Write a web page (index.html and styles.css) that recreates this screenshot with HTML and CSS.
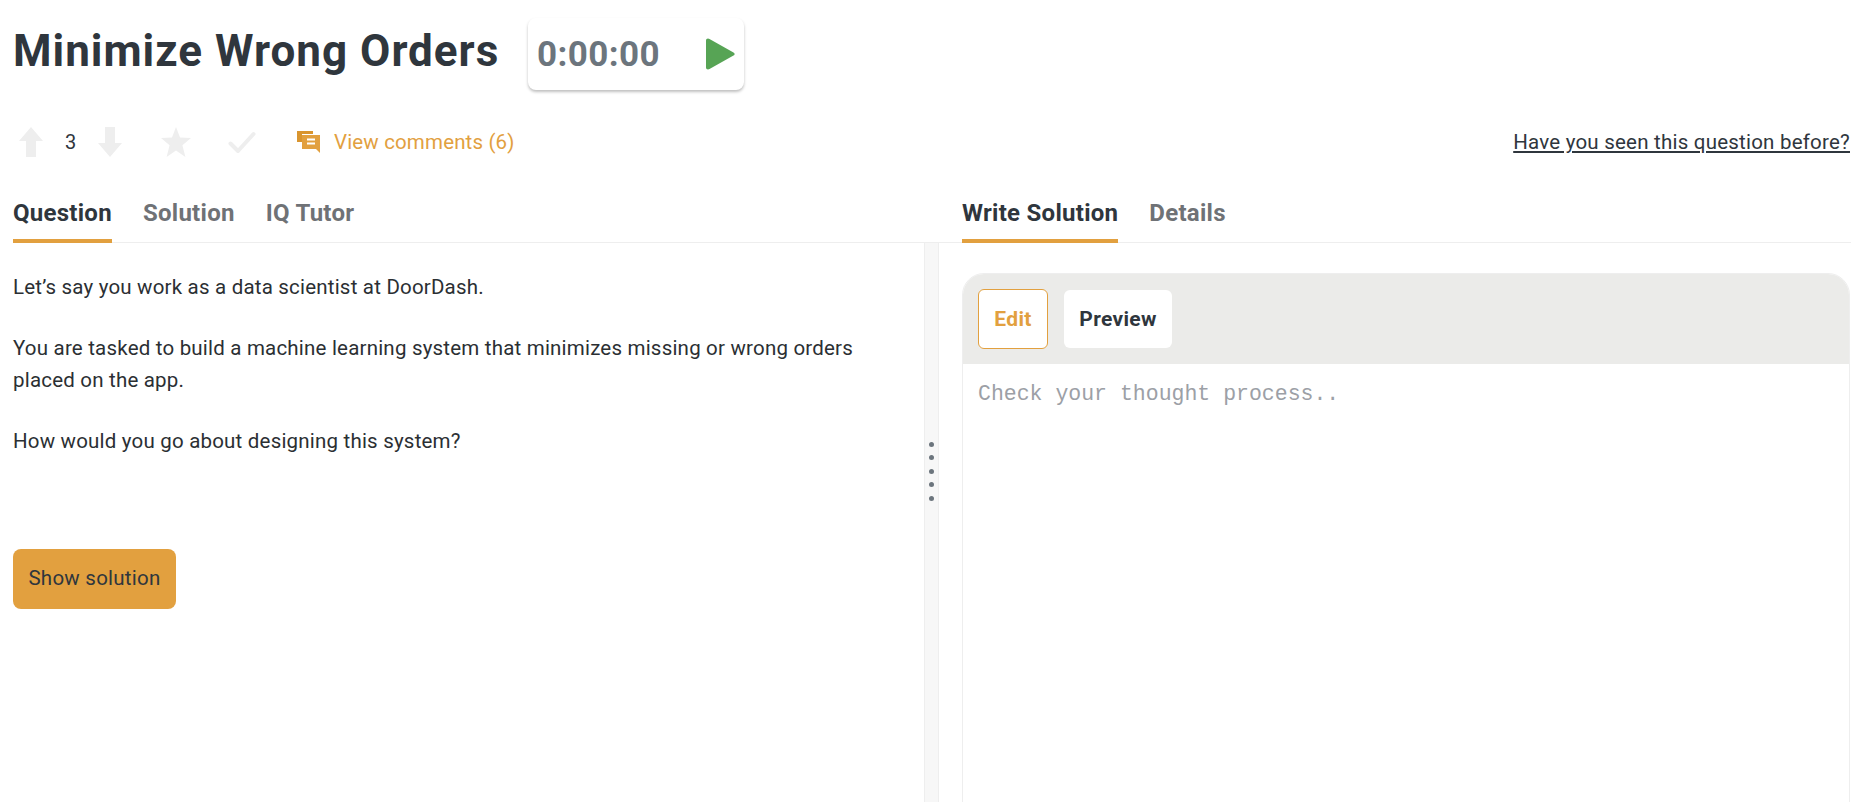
FILE: index.html
```html
<!DOCTYPE html>
<html lang="en">
<head>
<meta charset="utf-8">
<title>Minimize Wrong Orders</title>
<link rel="stylesheet" href="styles.css">
</head>
<body>
<header class="title-row">
  <h1 class="title">Minimize Wrong Orders</h1>
  <div class="timer">
    <span class="timer-value">0:00:00</span>
    <svg class="play" viewBox="0 0 29 32" aria-hidden="true"><path d="M2 0.5 C0.8 0.5 0 1.3 0 2.5 V29.5 C0 30.7 0.8 31.5 2 31.5 C2.5 31.5 3 31.3 3.5 31 L27.5 17.6 C29 16.7 29 15.3 27.5 14.4 L3.5 1 C3 0.7 2.5 0.5 2 0.5 Z"/></svg>
  </div>
</header>
<div class="action-row">
  <div class="actions">
    <svg class="icon vote" viewBox="0 0 24 30" aria-hidden="true"><path d="M12 0 L24 14 H17 V30 H7 V14 H0 Z"/></svg>
    <span class="count">3</span>
    <svg class="icon vote" viewBox="0 0 24 30" aria-hidden="true"><path d="M12 30 L24 16 H17 V0 H7 V16 H0 Z"/></svg>
    <svg class="icon star" viewBox="0 0 30 30" aria-hidden="true"><path d="M15 0 L19 10.6 L30 11 L21.4 18.2 L24.4 30 L15 23.4 L5.6 30 L8.6 18.2 L0 11 L11 10.6 Z"/></svg>
    <svg class="icon check" viewBox="0 0 28 23" aria-hidden="true"><path d="M2.5 12.5 L10 20 L25.5 3" /></svg>
    <a class="comments" href="#">
      <svg class="comment-icon" viewBox="0 0 23 22" aria-hidden="true"><path d="M0 0 H16 V3 H5 V11 H0 Z" class="back"/><path d="M5 4 H23 V18 H23 V22 L19 18 H5 Z"/><path d="M10 8.5 H18 M10 12.5 H18" class="lines"/></svg>
      <span>View comments (6)</span>
    </a>
  </div>
  <a class="seen" href="#">Have you seen this question before?</a>
</div>
<main class="panes">
  <section class="pane-left">
    <nav class="tabs">
      <span class="tab active">Question</span>
      <span class="tab">Solution</span>
      <span class="tab">IQ Tutor</span>
    </nav>
    <div class="question">
      <p>Let’s say you work as a data scientist at DoorDash.</p>
      <p>You are tasked to build a machine learning system that minimizes missing or wrong orders placed on the app.</p>
      <p>How would you go about designing this system?</p>
      <button class="show-btn" type="button">Show solution</button>
    </div>
  </section>
  <div class="gutter-col">
    <div class="gutter-top"></div>
    <div class="gutter">
      <i class="dot"></i><i class="dot"></i><i class="dot"></i><i class="dot"></i><i class="dot"></i>
    </div>
  </div>
  <section class="pane-right">
    <nav class="tabs tabs-right">
      <span class="tab active">Write Solution</span>
      <span class="tab">Details</span>
    </nav>
    <div class="editor-wrap">
      <div class="editor">
        <div class="editor-head">
          <button class="mode mode-edit" type="button">Edit</button>
          <button class="mode mode-preview" type="button">Preview</button>
        </div>
        <div class="editor-body">Check your thought process..</div>
      </div>
    </div>
  </section>
</main>
</body>
</html>
```
FILE: styles.css
```css
* { box-sizing: border-box; }
html, body { height: 100%; }
body {
  margin: 0;
  height: 802px;
  overflow: hidden;
  background: #fff;
  color: #2f363d;
  font-family: Roboto, "Noto Sans", sans-serif;
}
.title-row {
  display: flex;
  align-items: center;
  height: 108px;
  padding: 18px 0 18px 13px;
}
.title {
  margin: 0 0 6px;
  width: 515px;
  font-size: 44px;
  font-weight: 700;
  line-height: 64px;
  letter-spacing: 1px;
  color: #2f363d;
  white-space: nowrap;
}
.timer {
  display: flex;
  align-items: center;
  justify-content: space-between;
  width: 216px;
  height: 72px;
  padding: 0 9px 0 9px;
  border-radius: 8px;
  box-shadow: 0 2px 3px rgba(0,0,0,.25);
  background: #fff;
}
.timer-value { font-size: 35px; font-weight: 700; color: #6c757d; letter-spacing: 0.4px; }
.play { width: 29px; height: 32px; fill: #57a455; }
.action-row {
  display: flex;
  align-items: center;
  justify-content: space-between;
  height: 68px;
  padding: 0 1px 0 19px;
}
.actions { display: flex; align-items: center; }
.icon { display: block; fill: #eeeeee; }
.vote { width: 24px; height: 30px; }
.count { width: 55px; padding-left: 22px; font-size: 20px; color: #2f363d; }
.star { width: 30px; height: 30px; margin-left: 39px; }
.check { width: 28px; height: 23px; margin-left: 37px; fill: none; stroke: #eeeeee; stroke-width: 4; stroke-linecap: round; stroke-linejoin: round; }
.comments { display: flex; align-items: center; margin-left: 41px; color: #e2a03f; font-size: 20.5px; letter-spacing: 0.15px; text-decoration: none; }
.comment-icon { width: 23px; height: 22px; margin-right: 14px; fill: #e2a03f; }
.comment-icon .back { fill: #d9952f; }
.comment-icon .lines { fill: none; stroke: #fff; stroke-width: 2; }
.seen { font-size: 20.5px; letter-spacing: 0.22px; color: #2f363d; text-decoration: underline; white-space: nowrap; }
.panes { display: flex; height: 626px; }
.pane-left { width: 924px; flex: none; padding-left: 13px; }
.gutter-col { width: 15px; flex: none; display: flex; flex-direction: column; }
.gutter-top { height: 67px; border-bottom: 1px solid #eeeeee; }
.gutter {
  flex: 1;
  display: flex;
  flex-direction: column;
  align-items: center;
  gap: 8.4px;
  padding-top: 199px;
  background: #f7f7f7;
  border-left: 1px solid #eeeeee;
  border-right: 1px solid #eeeeee;
}
.dot { display: block; width: 5px; height: 5px; border-radius: 50%; background: #6c757d; }
.pane-right { flex: 1; min-width: 0; }
.tabs {
  display: flex;
  gap: 31px;
  height: 67px;
  align-items: flex-end;
  border-bottom: 1px solid #eeeeee;
}
.tabs-right { padding-left: 23px; }
.tab {
  display: block;
  height: 48px;
  font-size: 24px;
  font-weight: 700;
  letter-spacing: 0.27px;
  line-height: 37px;
  margin-bottom: -1px;
  color: #6f7276;
  white-space: nowrap;
}
.tab.active { color: #2f363d; border-bottom: 4px solid #e2a03f; }
.question { padding-top: 28px; font-size: 20.5px; letter-spacing: 0.2px; line-height: 32px; color: #2b2f33; }
.question p { margin: 0 0 29px; max-width: 880px; }
.show-btn {
  display: block;
  width: 163px;
  height: 60px;
  margin-top: 92px;
  padding: 0 0 3px;
  border: 0;
  border-radius: 8px;
  background: #e2a03f;
  color: #2f363d;
  font: inherit;
  font-size: 20.5px;
  letter-spacing: 0.25px;
}
.editor-wrap { padding: 30px 1px 0 23px; }
.editor {
  height: 560px;
  border: 1px solid #eeeeee;
  border-radius: 22px 22px 0 0;
  overflow: hidden;
}
.editor-head {
  display: flex;
  align-items: center;
  gap: 16px;
  height: 90px;
  padding: 0 15px;
  background: #ebebe9;
}
.mode {
  height: 58px;
  padding: 0;
  border: 0;
  border-radius: 6px;
  background: #fff;
  color: #2f363d;
  font: inherit;
  font-size: 21px;
  font-weight: 700;
  letter-spacing: 0.3px;
}
.mode-preview { width: 108px; }
.mode-edit { height: 60px; width: 70px; border: 1px solid #e2a03f; color: #e2a03f; }
.editor-body {
  padding: 14px 15px;
  font-family: "Liberation Mono", "DejaVu Sans Mono", monospace;
  font-size: 21.5px;
  line-height: 32px;
  color: #9ca0a6;
}
```
